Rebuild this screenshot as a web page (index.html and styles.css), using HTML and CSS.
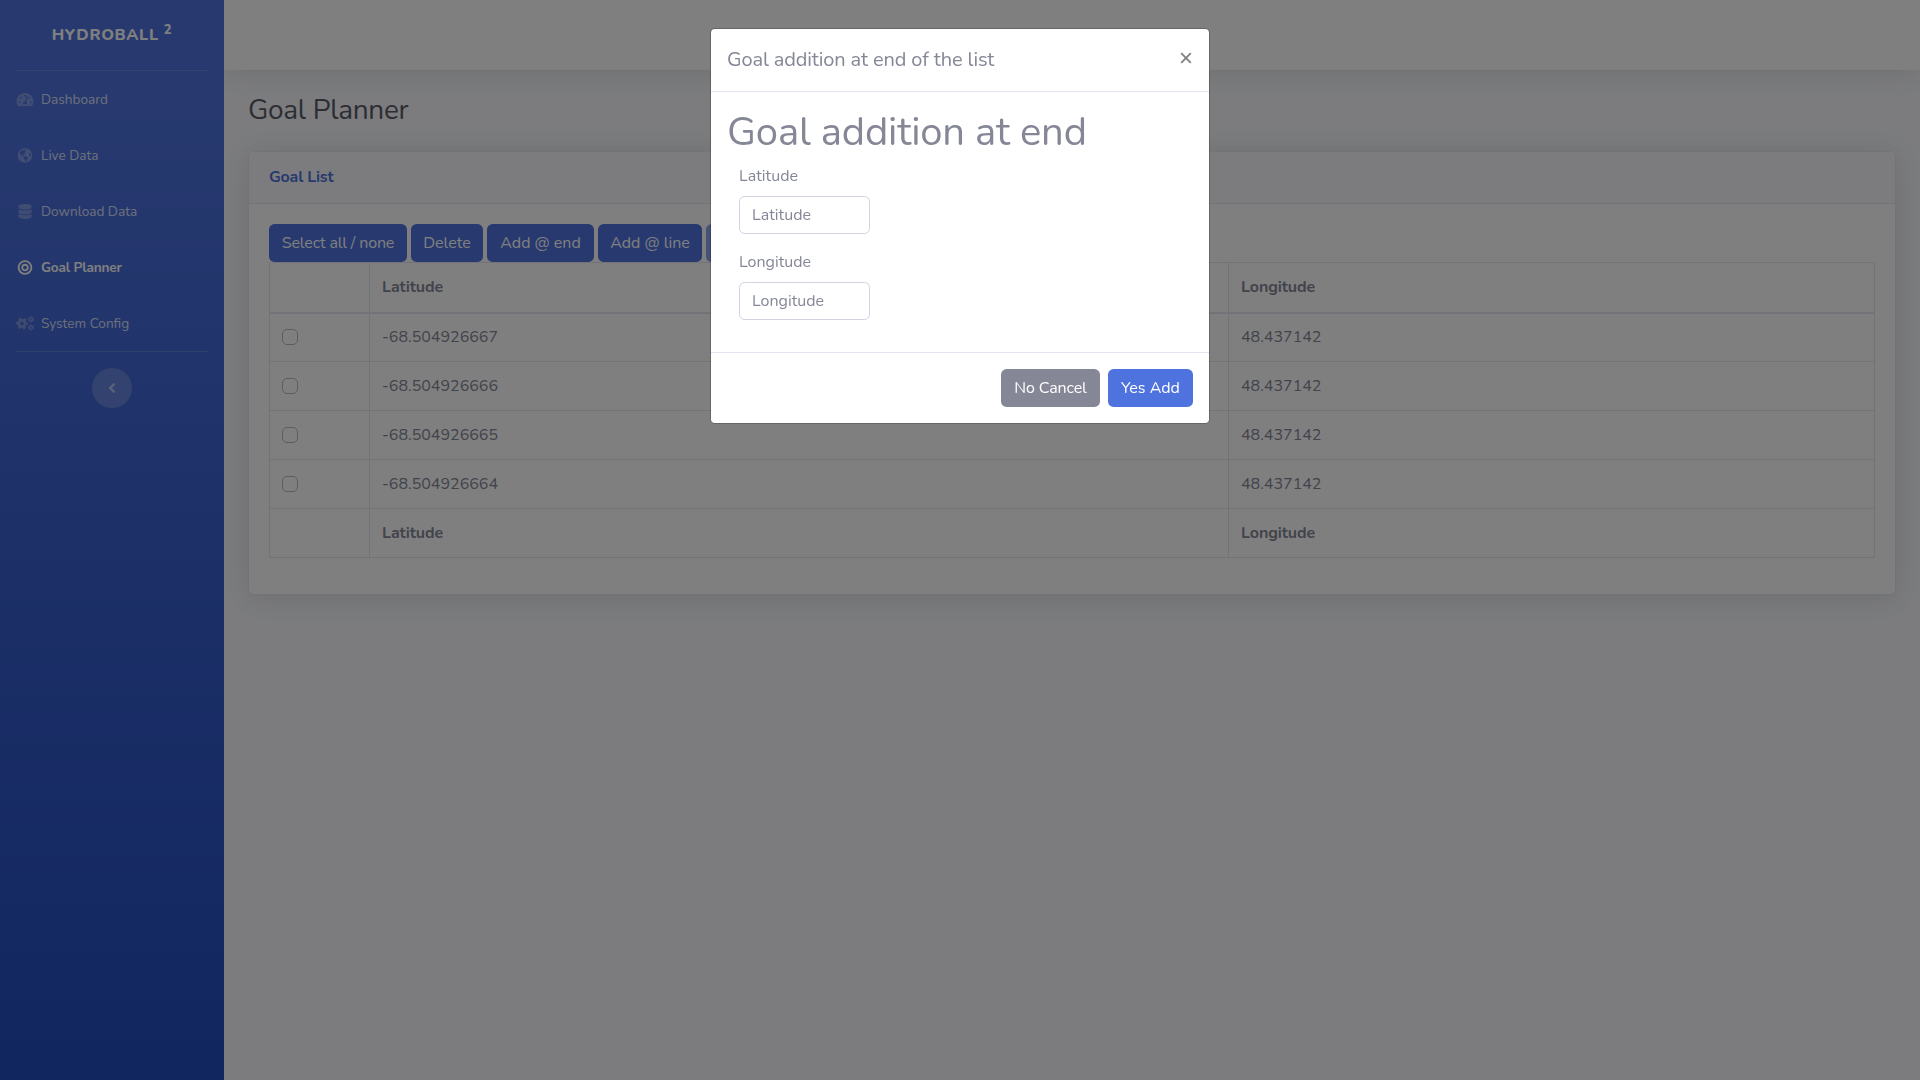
FILE: index.html
```html
<!DOCTYPE html>
<html lang="en">
<head>
<meta charset="utf-8">
<title>Goal Planner</title>
<link rel="stylesheet" href="styles.css">
</head>
<body>
<div class="wrapper">
  <nav class="sidebar">
    <a class="brand"><span class="t">Hydroball</span> <sup>2</sup></a>
    <hr class="divider">
    <a class="nav-link"><svg class="icon" viewBox="0 0 576 512"><path d="M288 32C128.94 32 0 160.94 0 320c0 52.8 14.25 102.26 39.06 144.8 5.61 9.62 16.3 15.2 27.44 15.2h443c11.14 0 21.83-5.58 27.44-15.2C561.75 422.26 576 372.8 576 320c0-159.06-128.94-288-288-288zm0 64c14.71 0 26.58 10.13 30.32 23.65-1.11 2.26-2.64 4.23-3.45 6.67l-9.22 27.67c-5.13 3.49-10.97 6.01-17.64 6.01-17.67 0-32-14.33-32-32S270.33 96 288 96zM96 384c-17.67 0-32-14.33-32-32s14.33-32 32-32 32 14.33 32 32-14.33 32-32 32zm48-160c-17.67 0-32-14.33-32-32s14.33-32 32-32 32 14.33 32 32-14.33 32-32 32zm246.77-72.41l-61.33 184C343.13 347.33 352 364.54 352 384c0 11.72-3.38 22.55-8.88 32H232.88c-5.5-9.45-8.88-20.28-8.88-32 0-33.94 26.5-61.43 59.9-63.59l61.34-184.01c4.17-12.56 17.73-19.45 30.36-15.17 12.57 4.19 19.35 17.79 15.17 30.36zm14.66 57.2l15.52-46.55c3.47-1.29 7.13-2.23 11.05-2.23 17.67 0 32 14.33 32 32s-14.33 32-32 32c-11.38-.01-20.89-6.28-26.57-15.22zM480 384c-17.67 0-32-14.33-32-32s14.33-32 32-32 32 14.33 32 32-14.33 32-32 32z"/></svg><span>Dashboard</span></a>
    <a class="nav-link"><svg class="icon" viewBox="0 0 496 512"><path d="M248 8C111.03 8 0 119.03 0 256s111.03 248 248 248 248-111.03 248-248S384.97 8 248 8zm82.29 357.6c-3.9 3.88-7.99 7.95-11.31 11.28-2.99 3-5.1 6.7-6.17 10.71-1.51 5.66-2.73 11.38-4.77 16.87l-17.39 46.85c-13.76 3-28 4.69-42.65 4.69v-27.38c1.69-12.62-7.64-36.26-22.63-51.25-6-6-9.37-14.14-9.37-22.63v-32.01c0-11.64-6.27-22.34-16.46-27.97-14.37-7.95-34.81-19.06-48.81-26.11-11.48-5.78-22.1-13.14-31.65-21.75l-.8-.72a114.792 114.792 0 0 1-18.06-20.74c-9.38-13.77-24.66-36.42-34.59-51.14 20.47-45.5 57.36-82.04 103.2-101.89l24.01 12.01C203.48 89.74 216 82.01 216 70.11v-11.3c7.99-1.29 16.12-2.11 24.39-2.42l28.3 28.3c6.25 6.25 6.25 16.38 0 22.63L264 112l-10.34 10.34c-3.12 3.12-3.12 8.19 0 11.31l4.69 4.69c3.12 3.12 3.12 8.19 0 11.31l-8 8a8.008 8.008 0 0 1-5.66 2.34h-8.99c-2.08 0-4.08.81-5.58 2.27l-9.92 9.65a8.008 8.008 0 0 0-1.58 9.31l15.59 31.19c2.66 5.32-1.21 11.58-7.15 11.58h-5.64c-1.93 0-3.79-.7-5.24-1.96l-9.28-8.06a16.017 16.017 0 0 0-15.55-3.1l-31.17 10.39a11.95 11.95 0 0 0-8.17 11.34c0 4.53 2.56 8.66 6.61 10.69l11.08 5.54c9.41 4.71 19.79 7.16 30.31 7.16s22.59 27.29 32 32h66.75c8.49 0 16.62 3.37 22.63 9.37l13.69 13.69a30.503 30.503 0 0 1 8.93 21.57 46.536 46.536 0 0 1-13.72 32.98zM417 274.25c-5.79-1.45-10.84-5-14.15-9.97l-17.98-26.97a23.97 23.97 0 0 1 0-26.62l19.59-29.38c2.32-3.47 5.5-6.29 9.24-8.15l12.98-6.49C440.2 193.59 448 223.87 448 256c0 8.67-.74 17.16-1.82 25.54L417 274.25z"/></svg><span>Live Data</span></a>
    <a class="nav-link"><svg class="icon" viewBox="0 0 448 512"><path d="M448 73.143v45.714C448 159.143 347.667 192 224 192S0 159.143 0 118.857V73.143C0 32.857 100.333 0 224 0s224 32.857 224 73.143zM448 176v102.857C448 319.143 347.667 352 224 352S0 319.143 0 278.857V176c48.125 33.143 136.208 48.572 224 48.572S399.874 209.143 448 176zm0 160v102.857C448 479.143 347.667 512 224 512S0 479.143 0 438.857V336c48.125 33.143 136.208 48.572 224 48.572S399.874 369.143 448 336z"/></svg><span>Download Data</span></a>
    <a class="nav-link active"><svg class="icon" viewBox="0 0 496 512"><path d="M248 8C111.03 8 0 119.03 0 256s111.03 248 248 248 248-111.03 248-248S384.97 8 248 8zm0 432c-101.69 0-184-82.29-184-184 0-101.69 82.29-184 184-184 101.69 0 184 82.29 184 184 0 101.69-82.29 184-184 184zm0-312c-70.69 0-128 57.31-128 128s57.31 128 128 128 128-57.31 128-128-57.31-128-128-128zm0 192c-35.29 0-64-28.71-64-64s28.71-64 64-64 64 28.71 64 64-28.71 64-64 64z"/></svg><span>Goal Planner</span></a>
    <a class="nav-link"><svg class="icon gears" viewBox="0 0 640 512"><g><circle cx="216" cy="256" r="112" stroke-width="104"/><circle cx="216" cy="256" r="182" stroke-width="66" stroke-dasharray="95.3 95.3" stroke-dashoffset="47.6"/><circle cx="530" cy="112" r="56" stroke-width="52"/><circle cx="530" cy="112" r="92" stroke-width="36" stroke-dasharray="48.17 48.17"/><circle cx="530" cy="400" r="56" stroke-width="52"/><circle cx="530" cy="400" r="92" stroke-width="36" stroke-dasharray="48.17 48.17"/></g></svg><span>System Config</span></a>
    <hr class="divider">
    <button class="toggle"><svg viewBox="0 0 256 512"><path d="M31.7 239l136-136c9.4-9.4 24.6-9.4 33.9 0l22.6 22.6c9.4 9.4 9.4 24.6 0 33.9L127.9 256l96.4 96.4c9.4 9.4 9.4 24.6 0 33.9L201.7 409c-9.4 9.4-24.6 9.4-33.9 0l-136-136c-9.5-9.4-9.5-24.6-.1-34z"/></svg></button>
  </nav>
  <div class="content">
    <header class="topbar"></header>
    <main class="page">
      <h1 class="page-title">Goal Planner</h1>
      <section class="card">
        <h6 class="card-header">Goal List</h6>
        <div class="card-body">
          <div class="toolbar">
            <button class="btn b1">Select all / none</button>
            <button class="btn b2">Delete</button>
            <button class="btn b3">Add @ end</button>
            <button class="btn b4">Add @ line</button>
            <button class="btn b5" disabled></button>
          </div>
          <table class="goals">
            <colgroup><col class="c1"><col class="c2"><col class="c3"></colgroup>
            <thead><tr><th></th><th>Latitude</th><th>Longitude</th></tr></thead>
            <tbody>
              <tr><td><input type="checkbox" class="check"></td><td>-68.504926667</td><td>48.437142</td></tr>
              <tr><td><input type="checkbox" class="check"></td><td>-68.504926666</td><td>48.437142</td></tr>
              <tr><td><input type="checkbox" class="check"></td><td>-68.504926665</td><td>48.437142</td></tr>
              <tr><td><input type="checkbox" class="check"></td><td>-68.504926664</td><td>48.437142</td></tr>
            </tbody>
            <tfoot><tr><th></th><th>Latitude</th><th>Longitude</th></tr></tfoot>
          </table>
        </div>
      </section>
    </main>
  </div>
</div>
<div class="backdrop">
  <div class="modal">
    <div class="modal-header"><h5>Goal addition at end of the list</h5><svg class="close" viewBox="0 0 12 12"><path d="M1.2 1.2l9.6 9.6M10.8 1.2l-9.6 9.6"/></svg></div>
    <div class="modal-body">
      <h1>Goal addition at end</h1>
      <div class="group"><label for="lat">Latitude</label><input id="lat" class="field" placeholder="Latitude"></div>
      <div class="group"><label for="lon">Longitude</label><input id="lon" class="field" placeholder="Longitude"></div>
    </div>
    <div class="modal-footer"><button class="btn cancel">No Cancel</button><button class="btn add">Yes Add</button></div>
  </div>
</div>
</body>
</html>
```
FILE: styles.css
```css
*, *::before, *::after { box-sizing: border-box; }
body { margin: 0; font: 400 16px/1.5 Nunito, Lato, sans-serif; color: #858796; background: #f8f9fc; overflow: hidden; }
h1, h5, h6 { margin: 0; font-weight: 400; line-height: 1.2; }
button, input { font: inherit; }
.wrapper { display: flex; height: 100vh; }
.sidebar { width: 224px; flex: none; display: flex; flex-direction: column; background: linear-gradient(180deg, #4e73df 10%, #224abe 100%); }
.brand { height: 70px; display: flex; justify-content: center; align-items: center; gap: 5px; color: #fff; font-weight: 800; text-transform: uppercase; letter-spacing: .7px; line-height: 1; }
.brand sup { font-size: 13px; line-height: 0; position: relative; top: -5px; vertical-align: baseline; }
.divider { width: 192px; height: 1px; margin: 0 16px; border: 0; background: rgba(255,255,255,.15); }
.nav-link { height: 56px; padding: 0 16px; display: flex; align-items: center; gap: 7px; font-size: 13.6px; color: rgba(255,255,255,.8); }
.nav-link span { padding-top: 2px; }
.nav-link.active { color: #fff; font-weight: 700; letter-spacing: -.15px; }
.icon { width: 18px; height: 15px; fill: rgba(255,255,255,.3); }
.active .icon { fill: #fff; }
.gears g { fill: none; stroke: #fff; opacity: .3; }
.toggle { width: 40px; height: 40px; margin: 16px auto 0; padding: 0; border: 0; border-radius: 50%; background: rgba(255,255,255,.2); display: flex; align-items: center; justify-content: center; }
.toggle svg { height: 16px; margin-right: 1px; fill: rgba(255,255,255,.5); }
.content { flex: 1; overflow: hidden; }
.topbar { height: 70px; background: #fff; box-shadow: 0 2.4px 28px 0 rgba(58,59,69,.15); }
.page { padding: 24px; }
.page-title { height: 33px; font-size: 28px; letter-spacing: -.3px; color: #5a5c69; margin-bottom: 24px; }
.card { background: #fff; border: 1px solid #e3e6f0; border-radius: 5.6px; box-shadow: 0 2.4px 28px 0 rgba(58,59,69,.15); }
.card-header { height: 52px; padding: 16px 20px; font-size: 16px; font-weight: 700; letter-spacing: -.2px; color: #4e73df; background: #f8f9fc; border-bottom: 1px solid #e3e6f0; border-radius: 5px 5px 0 0; }
.card-body { padding: 20px 20px 36px; }
.toolbar { display: flex; gap: 4px; }
.btn { height: 38px; padding: 0; border: 0; border-radius: 5.6px; background: #4e73df; color: #fff; white-space: nowrap; }
.btn:disabled { opacity: .65; }
.b1 { width: 138px; letter-spacing: -.15px; } .b2 { width: 72px; } .b3 { width: 107px; } .b4 { width: 104px; } .b5 { width: 120px; }
.goals { width: 100%; table-layout: fixed; border-collapse: collapse; }
.c1 { width: 100px; } .c2 { width: 859px; }
.goals th, .goals td { height: 49px; padding: 0 12px; border: 1px solid #e3e6f0; text-align: left; }
.goals th { font-weight: 700; letter-spacing: -.1px; }
.goals thead th { height: 50px; border-bottom-width: 2px; }
.check { display: block; appearance: none; width: 16px; height: 16px; margin: 0; border: 1px solid #b7b9cc; border-radius: 5px; }
.backdrop { position: fixed; inset: 0; background: rgba(0,0,0,.5); }
.modal { width: 500px; margin: 28px auto 0; background: #fff; background-clip: padding-box; border: 1px solid rgba(0,0,0,.2); border-radius: 4.8px; }
.modal-header { display: flex; justify-content: space-between; padding: 16px; border-bottom: 1px solid #e3e6f0; }
.modal-header h5 { font-size: 20px; line-height: 30px; letter-spacing: -.12px; }
.close { width: 12px; height: 12px; margin: 7px 1px 0 0; fill: none; stroke: #808080; stroke-width: 1.8; }
.modal-body { padding: 16px; }
.modal-body h1 { font-size: 40px; letter-spacing: -.18px; margin-bottom: 8px; }
.group { margin: 0 0 16px 12px; display: flex; flex-direction: column; gap: 8px; }
.field { width: 131px; height: 38px; padding: 0 12px; border: 1px solid #d1d3e2; border-radius: 5.6px; background: #fff; }
.field::placeholder { color: #858796; opacity: 1; }
.modal-footer { display: flex; justify-content: flex-end; gap: 8px; padding: 16px; border-top: 1px solid #e3e6f0; }
.cancel { width: 99px; letter-spacing: -.1px; background: #858796; }
.add { width: 85px; }
```
